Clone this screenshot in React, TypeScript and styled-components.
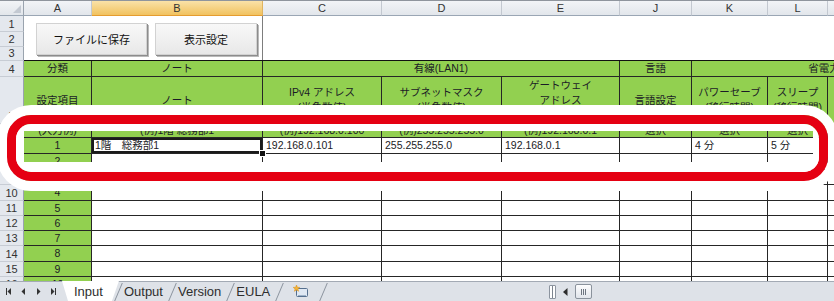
import React from 'react';
import styled, { createGlobalStyle, css } from 'styled-components';

const COLS = '24px 68px 171px 119px 120px 118px 72px 76px 60px 150px';
const FONT = '"Liberation Sans", "Noto Sans CJK JP", sans-serif';
const GREEN = '#92d050';
const LINE = '#262626';

const GlobalStyle = createGlobalStyle`
  html, body {
    margin: 0;
    padding: 0;
    background: #fff;
    overflow: hidden;
  }
  body {
    font-family: ${FONT};
  }
`;

const colLetters = ['A', 'B', 'C', 'D', 'E', 'J', 'K', 'L', 'M'];

interface DataRow {
  row: number;
  no: string;
  h: number;
  note?: string;
  ip?: string;
  mask?: string;
  gw?: string;
  save?: string;
  sleep?: string;
}

const dataRows: DataRow[] = [
  {
    row: 7,
    no: '1',
    h: 16,
    note: '1階　総務部1',
    ip: '192.168.0.101',
    mask: '255.255.255.0',
    gw: '192.168.0.1',
    save: '4 分',
    sleep: '5 分',
  },
  { row: 8, no: '2', h: 16 },
  { row: 9, no: '3', h: 15 },
  { row: 10, no: '4', h: 16 },
  { row: 11, no: '5', h: 15 },
  { row: 12, no: '6', h: 15 },
  { row: 13, no: '7', h: 15 },
  { row: 14, no: '8', h: 16 },
  { row: 15, no: '9', h: 15 },
  { row: 16, no: '10', h: 15 },
];

const TabBar = () => (
  <Styled.TabBar>
    <Styled.Nav>
      <svg width="5" height="7" viewBox="0 0 5 7">
        <rect x="0" y="0" width="1" height="7" fill="#333" />
        <polygon points="5,0 1.5,3.5 5,7" fill="#333" />
      </svg>
      <svg width="5" height="7" viewBox="0 0 5 7">
        <polygon points="4,0 0.5,3.5 4,7" fill="#333" />
      </svg>
      <svg width="5" height="7" viewBox="0 0 5 7">
        <polygon points="1,0 4.5,3.5 1,7" fill="#333" />
      </svg>
      <svg width="5" height="7" viewBox="0 0 5 7">
        <polygon points="0,0 3.5,3.5 0,7" fill="#333" />
        <rect x="4" y="0" width="1" height="7" fill="#333" />
      </svg>
    </Styled.Nav>
    <Styled.Tabs>
      <Styled.Tab $active>Input</Styled.Tab>
      <Styled.Tab>Output</Styled.Tab>
      <Styled.Tab>Version</Styled.Tab>
      <Styled.Tab>EULA</Styled.Tab>
      <Styled.Tab $icon>
        <svg width="15" height="13" viewBox="0 0 15 13">
          <rect x="3.5" y="3.5" width="11" height="8" rx="1" fill="#dfe8f3" stroke="#56708f" />
          <rect x="5" y="10" width="8" height="1" fill="#9fb3c9" />
          <polygon
            points="3.5,0 4.4,2.3 6.8,2.4 4.9,3.9 5.6,6.3 3.5,4.9 1.4,6.3 2.1,3.9 0.2,2.4 2.6,2.3"
            fill="#f3b53b"
            stroke="#d98c12"
            strokeWidth="0.5"
          />
        </svg>
      </Styled.Tab>
    </Styled.Tabs>
    <Styled.Scroll>
      <Styled.SplitBox />
      <svg width="5" height="8" viewBox="0 0 5 8">
        <polygon points="4.5,0 0,4 4.5,8" fill="#2d2d2d" />
      </svg>
      <Styled.Thumb>
        <span />
        <span />
        <span />
      </Styled.Thumb>
    </Styled.Scroll>
  </Styled.TabBar>
);

const App = () => (
  <>
    <GlobalStyle />
    <Styled.Window>
      <Styled.HeaderRow>
        <Styled.Corner>
          <svg width="8" height="8" viewBox="0 0 8 8">
            <polygon points="8,0 8,8 0,8" fill="#c3c9d2" />
          </svg>
        </Styled.Corner>
        {colLetters.map((l) => (
          <Styled.ColHead key={l} $active={l === 'B'}>
            {l}
          </Styled.ColHead>
        ))}
      </Styled.HeaderRow>

      <Styled.Body>
        <Styled.TopBlock>
          <Styled.RowNumStack>
            <Styled.RowNum $h={16}>1</Styled.RowNum>
            <Styled.RowNum $h={15}>2</Styled.RowNum>
            <Styled.RowNum $h={14}>3</Styled.RowNum>
          </Styled.RowNumStack>
          <Styled.TopArea>
            <Styled.ButtonArea>
              <Styled.SheetButton $w={111}>ファイルに保存</Styled.SheetButton>
              <Styled.SheetButton $w={102}>表示設定</Styled.SheetButton>
            </Styled.ButtonArea>
          </Styled.TopArea>
        </Styled.TopBlock>

        <Styled.Row $h={16}>
          <Styled.RowNum>4</Styled.RowNum>
          <Styled.Cell $fill="green">分類</Styled.Cell>
          <Styled.Cell $fill="green">ノート</Styled.Cell>
          <Styled.Cell $fill="green" $span={3}>
            有線(LAN1)
          </Styled.Cell>
          <Styled.Cell $fill="green">言語</Styled.Cell>
          <Styled.Cell $fill="green" $span={3}>
            省電力設定
          </Styled.Cell>
        </Styled.Row>

        <Styled.Row $h={47}>
          <Styled.RowNum>5</Styled.RowNum>
          <Styled.Cell $fill="green">設定項目</Styled.Cell>
          <Styled.Cell $fill="green">ノート</Styled.Cell>
          <Styled.Cell $fill="green" $stack>
            <span>IPv4 アドレス</span>
            <span>(半角数値)</span>
          </Styled.Cell>
          <Styled.Cell $fill="green" $stack>
            <span>サブネットマスク</span>
            <span>(半角数値)</span>
          </Styled.Cell>
          <Styled.Cell $fill="green" $stack>
            <span>ゲートウェイ</span>
            <span>アドレス</span>
            <span>(半角数値)</span>
          </Styled.Cell>
          <Styled.Cell $fill="green">言語設定</Styled.Cell>
          <Styled.Cell $fill="green" $stack>
            <span>パワーセーブ</span>
            <span>(移行時間)</span>
          </Styled.Cell>
          <Styled.Cell $fill="green" $stack>
            <span>スリープ</span>
            <span>(移行時間)</span>
          </Styled.Cell>
          <Styled.Cell $fill="green" />
        </Styled.Row>

        <Styled.Row $h={14}>
          <Styled.RowNum>6</Styled.RowNum>
          <Styled.Cell $fill="green">(入力例)</Styled.Cell>
          <Styled.Cell $fill="green">(例)1階 総務部1</Styled.Cell>
          <Styled.Cell $fill="green">(例)192.168.0.100</Styled.Cell>
          <Styled.Cell $fill="green">(例)255.255.255.0</Styled.Cell>
          <Styled.Cell $fill="green">(例)192.168.0.1</Styled.Cell>
          <Styled.Cell $fill="green">選択</Styled.Cell>
          <Styled.Cell $fill="green">選択</Styled.Cell>
          <Styled.Cell $fill="green">選択</Styled.Cell>
          <Styled.Cell $fill="green" />
        </Styled.Row>

        {dataRows.map((r) => (
          <Styled.Row key={r.row} $h={r.h}>
            <Styled.RowNum>{r.row}</Styled.RowNum>
            <Styled.Cell $fill="green">{r.no}</Styled.Cell>
            <Styled.Cell $align="left" $active={r.row === 7}>
              {r.note}
              {r.row === 7 && <Styled.FillHandle />}
            </Styled.Cell>
            <Styled.Cell $align="left">{r.ip}</Styled.Cell>
            <Styled.Cell $align="left">{r.mask}</Styled.Cell>
            <Styled.Cell $align="left">{r.gw}</Styled.Cell>
            <Styled.Cell $align="left" />
            <Styled.Cell $align="left">{r.save}</Styled.Cell>
            <Styled.Cell $align="left">{r.sleep}</Styled.Cell>
            <Styled.Cell $align="left" />
          </Styled.Row>
        ))}
      </Styled.Body>

      <TabBar />

      <Styled.Ring>
        <Styled.RingWindow />
      </Styled.Ring>
    </Styled.Window>
  </>
);

const Styled = {
  Window: styled.div`
    position: relative;
    width: 834px;
    height: 301px;
    overflow: hidden;
    background: #fff;
  `,
  HeaderRow: styled.div`
    display: grid;
    grid-template-columns: ${COLS};
    height: 16px;
    box-sizing: border-box;
    border-top: 1px solid #8f959d;
  `,
  Corner: styled.div`
    display: flex;
    align-items: flex-end;
    justify-content: flex-end;
    padding: 0 2px 2px 0;
    background: linear-gradient(#f2f4f7, #e2e6eb);
    border-right: 1px solid #9aa3ae;
    border-bottom: 1px solid #9aa6b4;
  `,
  ColHead: styled.div<{ $active?: boolean }>`
    display: flex;
    align-items: center;
    justify-content: center;
    font: 11px ${FONT};
    color: #333;
    border-right: 1px solid #c3c8d0;
    border-bottom: 1px solid #9aa6b4;
    background: linear-gradient(#f2f4f7, #e2e6eb);
    ${(p) =>
      p.$active &&
      css`
        background: linear-gradient(#fae2a8, #f1c25f);
        border-bottom-color: #e59c2f;
        border-right-color: #e0b460;
      `}
  `,
  Body: styled.div`
    height: 265px;
    overflow: hidden;
  `,
  TopBlock: styled.div`
    display: flex;
    height: 45px;
  `,
  RowNumStack: styled.div`
    display: flex;
    flex-direction: column;
    width: 24px;
    flex: none;
  `,
  RowNum: styled.div<{ $h?: number }>`
    display: flex;
    align-items: flex-end;
    justify-content: center;
    box-sizing: border-box;
    padding-bottom: 1px;
    line-height: 13px;
    ${(p) => p.$h && `height: ${p.$h}px;`}
    font: 11px ${FONT};
    color: #333;
    background: #e4e8ee;
    border-right: 1px solid #9aa3ae;
    border-bottom: 1px solid #c7ccd4;
  `,
  TopArea: styled.div`
    flex: 1;
    display: flex;
    box-sizing: border-box;
    border-bottom: 1px solid #111;
  `,
  ButtonArea: styled.div`
    width: 239px;
    box-sizing: border-box;
    display: flex;
    align-items: flex-start;
    gap: 8px;
    padding: 7px 0 0 12px;
    border-right: 1px solid #7d7d7d;
  `,
  SheetButton: styled.button<{ $w: number }>`
    width: ${(p) => p.$w}px;
    height: 32px;
    box-sizing: border-box;
    padding: 0;
    font: 11px ${FONT};
    color: #111;
    background: linear-gradient(#f8f8f8, #e8e8e8);
    border: 1px solid #d2d2d2;
    border-radius: 0;
    box-shadow: 1px 1px 0 #8c8c8c, 2px 2px 0 #b9b9b9;
  `,
  Row: styled.div<{ $h: number }>`
    display: grid;
    grid-template-columns: ${COLS};
    height: ${(p) => p.$h}px;
  `,
  Cell: styled.div<{
    $fill?: 'green' | 'white';
    $align?: 'left' | 'center';
    $span?: number;
    $stack?: boolean;
    $active?: boolean;
  }>`
    position: relative;
    display: flex;
    flex-direction: ${(p) => (p.$stack ? 'column' : 'row')};
    align-items: center;
    justify-content: center;
    ${(p) =>
      p.$align === 'left' &&
      css`
        justify-content: flex-start;
        padding-left: 3px;
      `}
    ${(p) => p.$span && `grid-column: span ${p.$span};`}
    box-sizing: border-box;
    min-width: 0;
    overflow: ${(p) => (p.$active ? 'visible' : 'hidden')};
    white-space: nowrap;
    font-size: 10.5px;
    line-height: 15px;
    color: #1b1b26;
    background: ${(p) => (p.$fill === 'green' ? GREEN : '#fff')};
    border-right: 1px solid ${LINE};
    border-bottom: 1px solid ${LINE};
    ${(p) =>
      p.$active &&
      css`
        box-shadow: inset 0 0 0 2px #1a1a1a;
        z-index: 1;
      `}
  `,
  FillHandle: styled.span`
    position: absolute;
    right: -4px;
    bottom: -4px;
    width: 5px;
    height: 5px;
    background: #111;
    border: 1px solid #fff;
  `,
  TabBar: styled.div`
    display: flex;
    height: 20px;
    box-sizing: border-box;
    background: #dee2e8;
    border-top: 1px solid #a3aab4;
  `,
  Nav: styled.div`
    width: 62px;
    flex: none;
    display: flex;
    align-items: center;
    gap: 10px;
    padding-left: 6px;
    box-sizing: border-box;
  `,
  Tabs: styled.div`
    width: 487px;
    flex: none;
    display: flex;
  `,
  Tab: styled.div<{ $active?: boolean; $icon?: boolean }>`
    position: relative;
    z-index: 0;
    display: flex;
    align-items: center;
    font: 13px ${FONT};
    color: #2e2e2e;
    padding: ${(p) => (p.$active ? '0 16px 0 12px' : p.$icon ? '0 16px 0 13px' : '0 10px 0 5px')};
    &::before {
      content: '';
      position: absolute;
      inset: -1px 0 0 0;
      z-index: -1;
      background: ${(p) => (p.$active ? '#fff' : 'transparent')};
      clip-path: polygon(0 0, 100% 0, calc(100% - 7px) 100%, 6px 100%);
    }
    &::after {
      content: '';
      position: absolute;
      right: 0;
      top: 1px;
      bottom: 0;
      width: 1px;
      background: #8b939e;
      transform: skewX(-23deg);
    }
  `,
  Scroll: styled.div`
    flex: 1;
    display: flex;
    align-items: center;
    gap: 7px;
  `,
  SplitBox: styled.div`
    width: 7px;
    height: 14px;
    box-sizing: border-box;
    border: 1px solid #8c949f;
    border-radius: 1px;
    background: linear-gradient(90deg, #fff 0 2px, #7d858f 2px 3px, #fff 3px);
  `,
  Thumb: styled.div`
    width: 17px;
    height: 15px;
    box-sizing: border-box;
    display: flex;
    align-items: center;
    justify-content: center;
    gap: 1px;
    border: 1px solid #8a929c;
    border-radius: 2px;
    background: linear-gradient(#fdfdfe, #e1e5eb);
    span {
      width: 1px;
      height: 6px;
      background: #6d7580;
    }
  `,
  Ring: styled.div`
    position: absolute;
    left: 7px;
    top: 115px;
    width: 821px;
    height: 66px;
    box-sizing: border-box;
    border: 9px solid #e50012;
    border-radius: 24px;
    box-shadow: 0 0 0 10px #fff;
    overflow: hidden;
    z-index: 5;
    pointer-events: none;
  `,
  RingWindow: styled.div`
    position: absolute;
    left: 8px;
    top: 7px;
    right: 6px;
    bottom: 10px;
    box-shadow: 0 0 0 60px #fff;
  `,
};

export default App;
